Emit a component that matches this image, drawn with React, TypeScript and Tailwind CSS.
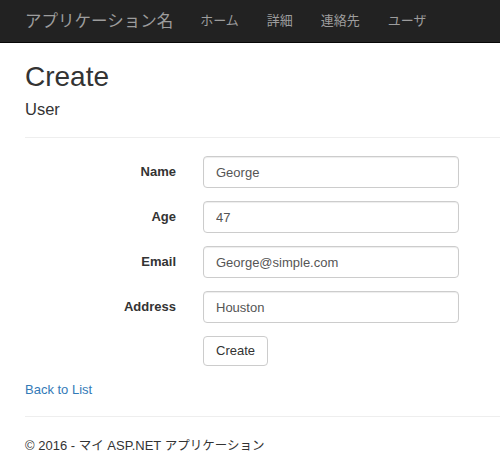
const fields = [
  { label: 'Name', value: 'George' },
  { label: 'Age', value: '47' },
  { label: 'Email', value: 'George@simple.com' },
  { label: 'Address', value: 'Houston' },
];

const navItems = ['ホーム', '詳細', '連絡先', 'ユーザ'];

export default function App() {
  return (
    <div
      className="min-h-[473px] bg-white text-[#333] text-[13px] leading-[20px]"
      style={{ fontFamily: '"Liberation Sans", Arial, "Noto Sans CJK JP", sans-serif' }}
    >
      <nav className="h-[43px] bg-[#222] border-b border-[#080808] flex items-center pl-[25px]">
        <span className="text-[16.5px] text-[#9d9d9d] mr-[13px]">アプリケーション名</span>
        {navItems.map((item) => (
          <a key={item} className="px-[14px] text-[13px] text-[#9d9d9d]">
            {item}
          </a>
        ))}
      </nav>

      <div className="pl-[25px]">
        <h2 className="text-[28px] leading-[33px] mt-[17px] font-normal">Create</h2>
        <h4 className="text-[16.5px] leading-[20px] mt-[6px] font-normal">User</h4>
        <hr className="mt-[18px] border-t border-[#eee]" />

        <form className="pt-[18px]">
          {fields.map((f) => (
            <div key={f.label} className="flex items-center mb-[13px]">
              <label className="w-[151px] text-right font-bold">{f.label}</label>
              <input
                defaultValue={f.value}
                className="ml-[27px] w-[256px] h-[32px] px-[12px] border border-[#ccc] rounded-[4px] text-[#555] shadow-[inset_0_1px_1px_rgba(0,0,0,0.075)]"
              />
            </div>
          ))}
          <div className="pl-[178px]">
            <button
              type="button"
              className="h-[30px] px-[12px] border border-[#ccc] rounded-[4px] bg-white text-[#333]"
            >
              Create
            </button>
          </div>
        </form>

        <div className="mt-[14px]">
          <a className="text-[#337ab7]">Back to List</a>
        </div>
        <hr className="mt-[16px] border-t border-[#eee]" />
        <footer className="mt-[19px]">
          <p>
            © 2016 - <span className="text-[12.5px]">マイ</span> ASP.NET{' '}
            <span className="text-[12.5px]">アプリケーション</span>
          </p>
        </footer>
      </div>
    </div>
  );
}
